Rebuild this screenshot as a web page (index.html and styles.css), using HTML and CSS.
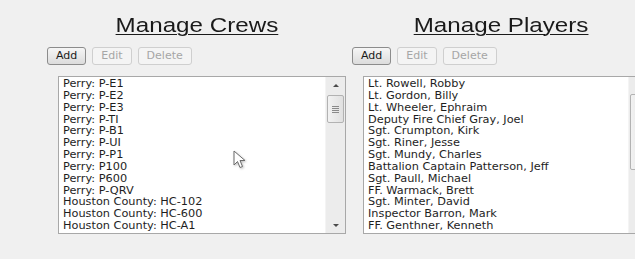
FILE: index.html
```html
<!DOCTYPE html>
<html lang="en">
<head>
    <meta charset="UTF-8">
    <meta name="viewport" content="width=device-width, initial-scale=1.0">
    <title>Manage Crews and Players</title>
    <link rel="stylesheet" href="styles.css">
</head>
<body>
    <div class="page">
        <section class="panel">
            <h2 class="title"><span>Manage Crews</span></h2>
            <div class="toolbar">
                <button class="btn">Add</button>
                <button class="btn" disabled>Edit</button>
                <button class="btn" disabled>Delete</button>
            </div>
            <div class="listbox">
                <ul class="items">
                    <li>Perry: P-E1</li>
                    <li>Perry: P-E2</li>
                    <li>Perry: P-E3</li>
                    <li>Perry: P-TI</li>
                    <li>Perry: P-B1</li>
                    <li>Perry: P-UI</li>
                    <li>Perry: P-P1</li>
                    <li>Perry: P100</li>
                    <li>Perry: P600</li>
                    <li>Perry: P-QRV</li>
                    <li>Houston County: HC-102</li>
                    <li>Houston County: HC-600</li>
                    <li>Houston County: HC-A1</li>
                </ul>
                <div class="scrollbar">
                    <span class="arrow up"></span>
                    <div class="track">
                        <div class="thumb crews-thumb"><span class="grip"></span></div>
                    </div>
                    <span class="arrow down"></span>
                </div>
            </div>
        </section>

        <section class="panel">
            <h2 class="title"><span>Manage Players</span></h2>
            <div class="toolbar">
                <button class="btn">Add</button>
                <button class="btn" disabled>Edit</button>
                <button class="btn" disabled>Delete</button>
            </div>
            <div class="listbox wide">
                <ul class="items">
                    <li>Lt. Rowell, Robby</li>
                    <li>Lt. Gordon, Billy</li>
                    <li>Lt. Wheeler, Ephraim</li>
                    <li>Deputy Fire Chief Gray, Joel</li>
                    <li>Sgt. Crumpton, Kirk</li>
                    <li>Sgt. Riner, Jesse</li>
                    <li>Sgt. Mundy, Charles</li>
                    <li>Battalion Captain Patterson, Jeff</li>
                    <li>Sgt. Paull, Michael</li>
                    <li>FF. Warmack, Brett</li>
                    <li>Sgt. Minter, David</li>
                    <li>Inspector Barron, Mark</li>
                    <li>FF. Genthner, Kenneth</li>
                </ul>
                <div class="scrollbar">
                    <span class="arrow up"></span>
                    <div class="track">
                        <div class="thumb players-thumb"><span class="grip"></span></div>
                    </div>
                    <span class="arrow down"></span>
                </div>
            </div>
        </section>
    </div>

    <svg class="cursor" width="14" height="20" viewBox="0 0 14 20">
        <path d="M1 1 L1 15 L4.5 11.5 L7 17.5 L9.5 16.5 L7 10.5 L12 10.5 Z" fill="#ffffff" stroke="#6b6b6b" stroke-width="1" stroke-linejoin="round"/>
    </svg>
</body>
</html>
```

FILE: styles.css
```css
html, body {
    margin: 0;
    height: 100%;
    overflow: hidden;
}
body {
    background: #f0f0f0;
    font-family: "DejaVu Sans", Verdana, sans-serif;
    color: #1e1e1e;
    position: relative;
}
.page {
    display: flex;
    width: 635px;
    height: 259px;
    box-sizing: border-box;
    padding: 12px 0 0 47px;
    overflow: hidden;
}
.panel {
    flex: 0 0 305px;
}
.title {
    margin: 0;
    padding-right: 6px;
    text-align: center;
    font-family: "Liberation Sans", Arial, sans-serif;
    font-weight: normal;
    font-size: 20.5px;
    line-height: 25px;
    color: #1a1a1a;
}
.title span {
    display: inline-block;
    transform: scaleX(1.18);
    text-decoration: underline;
    text-decoration-thickness: 1px;
    text-underline-offset: 2px;
}
.toolbar {
    display: flex;
    gap: 6px;
    margin-top: 10px;
}
.btn {
    height: 18px;
    padding: 0 8px;
    font-family: "DejaVu Sans", Verdana, sans-serif;
    font-size: 11px;
    color: #1a1a1a;
    background: linear-gradient(#f6f6f6, #dcdcdc);
    border: 1px solid #8c8c8c;
    border-radius: 3px;
    line-height: 16px;
}
.btn:disabled {
    color: #a6a6a6;
    background: #f4f4f4;
    border-color: #cfcfcf;
}
.listbox {
    display: flex;
    width: 288px;
    height: 158px;
    margin: 11px 0 0 11px;
    background: #ffffff;
    border: 1px solid #a8a8a8;
    box-sizing: border-box;
}
.listbox.wide {
    width: 286px;
}
.items {
    flex: 1;
    min-width: 0;
    margin: 0;
    padding: 1px 0 0 4px;
    list-style: none;
    overflow: hidden;
    font-size: 11.3px;
    line-height: 11.85px;
}
.items li {
    white-space: nowrap;
}
.scrollbar {
    display: flex;
    flex-direction: column;
    width: 19px;
    background: #ececec;
    border-left: 1px solid #f4f4f4;
}
.arrow {
    height: 16px;
    display: flex;
    align-items: center;
    justify-content: center;
}
.arrow::before {
    content: "";
    border-left: 3px solid transparent;
    border-right: 3px solid transparent;
}
.arrow.up::before {
    border-bottom: 3px solid #4a4a4a;
}
.arrow.down::before {
    border-top: 3px solid #4a4a4a;
}
.track {
    flex: 1;
    padding: 0 1px;
}
.thumb {
    display: flex;
    align-items: center;
    justify-content: center;
    background: linear-gradient(to right, #f2f2f2, #e0e0e0);
    border: 1px solid #b2b2b2;
    border-radius: 2px;
}
.crews-thumb {
    height: 26px;
    margin-top: 2px;
}
.players-thumb {
    height: 74px;
    margin-top: 1px;
}
.grip {
    width: 7px;
    height: 7px;
    background: repeating-linear-gradient(#8a8a8a 0 1px, transparent 1px 2px);
}
.cursor {
    position: absolute;
    left: 233px;
    top: 150px;
    filter: drop-shadow(1px 1px 1px rgba(0, 0, 0, 0.25));
}
```
